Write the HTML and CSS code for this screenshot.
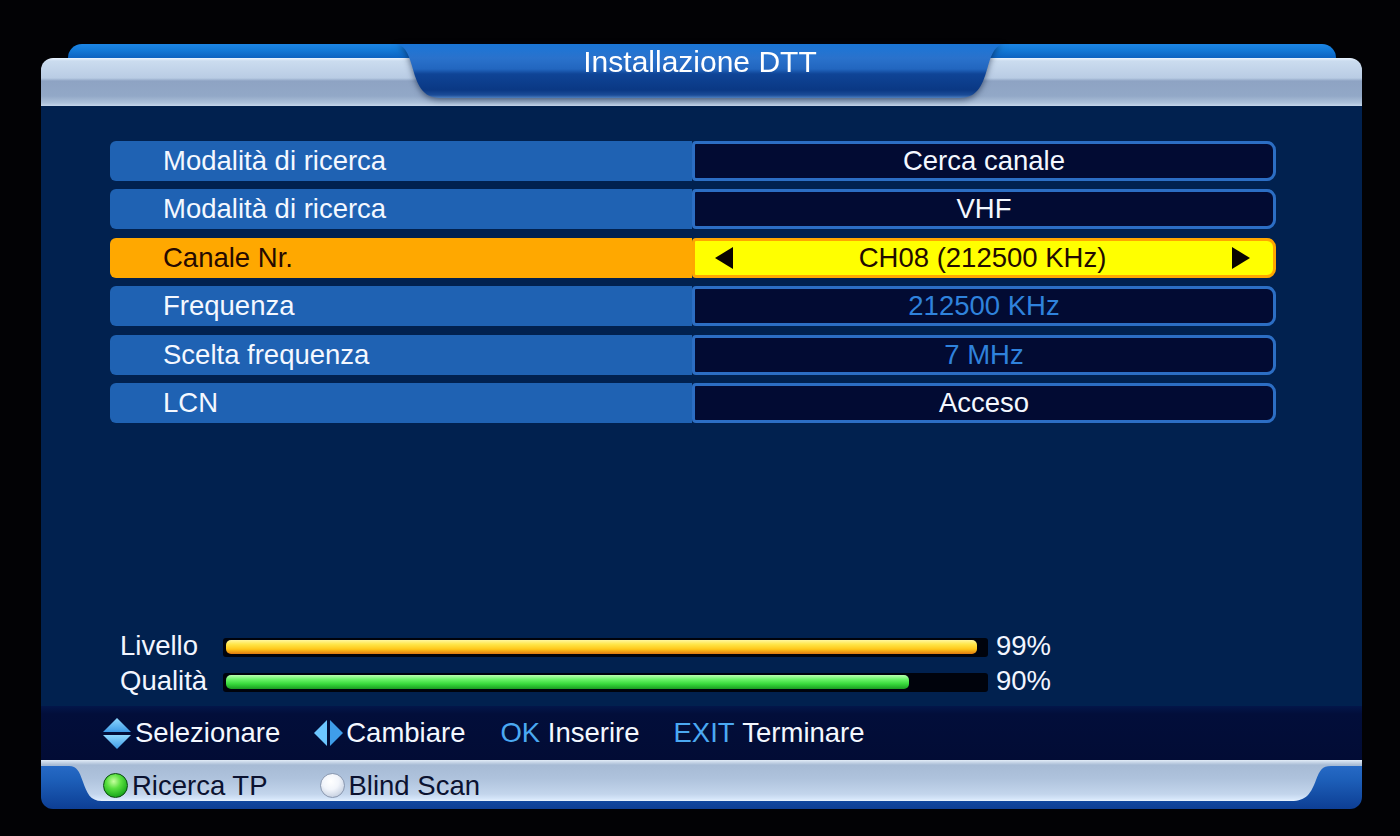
FILE: index.html
```html
<!DOCTYPE html>
<html lang="it">
<head>
<meta charset="utf-8">
<title>Installazione DTT</title>
<link rel="stylesheet" href="styles.css">
</head>
<body>
<div class="screen">
  <header class="header">
    <div class="hdr-strip"></div>
    <div class="hdr-bar"></div>
    <div class="hdr-tab">
      <div class="tab-shape"><h1 class="title">Installazione DTT</h1></div>
    </div>
  </header>

  <main class="main">
    <div class="rows">
      <div class="row"><div class="label">Modalità di ricerca</div><div class="value">Cerca canale</div></div>
      <div class="row"><div class="label">Modalità di ricerca</div><div class="value">VHF</div></div>
      <div class="row sel"><div class="label">Canale Nr.</div><div class="value"><span class="arr arr-l"></span><span class="val-text">CH08 (212500 KHz)</span><span class="arr arr-r"></span></div></div>
      <div class="row"><div class="label">Frequenza</div><div class="value dim">212500 KHz</div></div>
      <div class="row"><div class="label">Scelta frequenza</div><div class="value dim">7 MHz</div></div>
      <div class="row"><div class="label">LCN</div><div class="value">Acceso</div></div>
    </div>

    <div class="signal">
      <div class="sig-row">
        <span class="sig-label">Livello</span>
        <div class="track"><div class="fill fill-yellow" style="width:99%"></div></div>
        <span class="pct">99%</span>
      </div>
      <div class="sig-row">
        <span class="sig-label">Qualità</span>
        <div class="track"><div class="fill fill-green" style="width:90%"></div></div>
        <span class="pct">90%</span>
      </div>
    </div>
  </main>

  <div class="help">
    <div class="hitem">
      <svg class="ico-ud" width="28" height="31" viewBox="0 0 28 31">
        <defs>
          <linearGradient id="gb" x1="0" y1="0" x2="0" y2="1">
            <stop offset="0" stop-color="#8fd8ff"/>
            <stop offset="1" stop-color="#3d9ae6"/>
          </linearGradient>
        </defs>
        <polygon points="14,0 28,14 0,14" fill="url(#gb)"/>
        <polygon points="0,17 28,17 14,31" fill="url(#gb)"/>
      </svg>
      <span>Selezionare</span>
    </div>
    <div class="hitem">
      <svg class="ico-lr" width="29" height="26" viewBox="0 0 29 26">
        <polygon points="0,13 13,0 13,26" fill="#6cc6ff"/>
        <polygon points="16,0 29,13 16,26" fill="#3f9eea"/>
      </svg>
      <span>Cambiare</span>
    </div>
    <div class="hitem"><span class="key">OK</span>&nbsp;<span>Inserire</span></div>
    <div class="hitem"><span class="key">EXIT</span>&nbsp;<span>Terminare</span></div>
  </div>

  <footer class="bottom">
    <div class="silver">
      <div class="bitem"><span class="radio radio-green"></span><span>Ricerca TP</span></div>
      <div class="bitem"><span class="radio radio-white"></span><span>Blind Scan</span></div>
    </div>
  </footer>
</div>
</body>
</html>
```

FILE: styles.css
```css
html, body {
  margin: 0;
  padding: 0;
}

body {
  background: #020205;
  font-family: "Liberation Sans", Arial, sans-serif;
  color: #f2f6ff;
  width: 1400px;
  height: 836px;
  overflow: hidden;
}

.screen {
  width: 1321px;
  margin: 44px 0 0 41px;
}

/* ---------- header ---------- */
.header {
  position: relative;
  height: 62px;
}

.hdr-strip {
  height: 14px;
  margin: 0 26px 0 27px;
  border-radius: 16px 16px 0 0;
  background: linear-gradient(to bottom, #1c86e6 0, #137ad8 6px, #0c62c0 14px);
}

.hdr-bar {
  height: 48px;
  border-radius: 12px 12px 0 0;
  background: linear-gradient(to bottom,
    #eaf4ff 0,
    #cbdcef 3px,
    #b9cce4 20px,
    #8ea3c3 23px,
    #92a8c7 38px,
    #adc1da 45px,
    #c6d7ec 48px);
}

.hdr-tab {
  position: absolute;
  left: 353px;
  top: 0;
  width: 612px;
  height: 56px;
  filter: drop-shadow(0 2px 3px rgba(0, 16, 48, 0.55));
}

.tab-shape {
  width: 612px;
  height: 56px;
  clip-path: path("M0,0 H612 C602,0 598,8 594,22 C589,40 584,54 566,54 H46 C28,54 23,40 18,22 C14,8 10,0 0,0 Z");
  background: linear-gradient(to bottom,
    #1a76d8 0,
    #2a72cc 14px,
    #2266bf 25px,
    #0f4496 30px,
    #0a3884 46px,
    #1b4c98 51px,
    #4e7fbe 54px);
}

.title {
  margin: 0;
  padding-top: 2px;
  font-size: 30px;
  font-weight: normal;
  line-height: 32px;
  text-align: center;
  color: #ffffff;
}

/* ---------- main ---------- */
.main {
  height: 600px;
  box-sizing: border-box;
  background: #01214f;
  display: flex;
  flex-direction: column;
}

.rows {
  display: flex;
  flex-direction: column;
  gap: 8.4px;
  padding: 35px 86px 0 69px;
}

.row {
  display: flex;
  height: 40px;
  font-size: 27.5px;
  line-height: 40px;
}

.label {
  width: 582px;
  flex: none;
  box-sizing: border-box;
  padding-left: 53px;
  background: #1f62b3;
  border-radius: 6px 0 0 6px;
  color: #f4f8ff;
}

.value {
  flex: 1;
  box-sizing: border-box;
  border: 3px solid #2c6ec4;
  border-radius: 4px 9px 9px 4px;
  background: #020b33;
  text-align: center;
  line-height: 34px;
  color: #f4f8ff;
}

.value.dim {
  color: #2f82dc;
}

.row.sel .label {
  background: #ffa800;
  color: #260a00;
}

.row.sel .value {
  background: #ffff00;
  border-color: #ffa600;
  color: #220a00;
  display: flex;
  align-items: center;
  padding: 0 23px 0 20px;
}

.val-text {
  flex: 1;
  text-align: center;
}

.arr {
  width: 0;
  height: 0;
  border-top: 11px solid transparent;
  border-bottom: 11px solid transparent;
}

.arr-l {
  border-right: 18px solid #0a0400;
}

.arr-r {
  border-left: 18px solid #0a0400;
}

/* ---------- signal bars ---------- */
.signal {
  margin-top: auto;
  padding: 0 0 7.5px 79px;
}

.sig-row {
  display: flex;
  align-items: center;
  height: 35px;
  font-size: 27.5px;
}

.sig-label {
  width: 103px;
  flex: none;
  color: #f2f6ff;
}

.track {
  width: 765px;
  height: 19px;
  box-sizing: border-box;
  padding: 2.5px 3px;
  background: #00030c;
  border-radius: 3px;
  margin-top: 2px;
}

.fill {
  height: 14px;
  border-radius: 5px;
}

.fill-yellow {
  background: linear-gradient(to bottom, #fff7a0 0, #ffe64a 30%, #ffc81a 65%, #e07a10 100%);
}

.fill-green {
  background: linear-gradient(to bottom, #b8ffb0 0, #6cf46a 30%, #36d83a 65%, #1a9a22 100%);
}

.pct {
  margin-left: 8px;
  color: #f2f6ff;
}

/* ---------- help bar ---------- */
.help {
  height: 54px;
  display: flex;
  align-items: center;
  padding-left: 62px;
  background: linear-gradient(to bottom, #03164a 0, #020e3a 8px, #020c35 100%);
  font-size: 27.5px;
  color: #f4f8ff;
}

.hitem {
  display: flex;
  align-items: center;
  margin-right: 34px;
}

.hitem:nth-child(2) {
  margin-right: 35px;
}

.ico-ud {
  margin-right: 4px;
}

.ico-lr {
  margin-right: 3px;
}

.key {
  color: #4ba9f2;
}

/* ---------- bottom bar ---------- */
.bottom {
  height: 49px;
  border-radius: 6px 6px 12px 12px;
  background: linear-gradient(to bottom, #2a6ecb 0, #1d5fb9 40%, #0d3e94 100%);
}

.silver {
  height: 41px;
  box-sizing: border-box;
  padding: 10px 0 0 62px;
  display: flex;
  align-items: center;
  clip-path: path("M0,0 H1321 V6 H1290 C1281,6 1279,10 1275,20 C1270,33 1266,41 1250,41 H61 C49,41 46,33 42,22 C38,11 36,6 28,6 H0 Z");
  background: linear-gradient(to bottom,
    #e2ecf7 0,
    #a7bbd5 5px,
    #aec2dc 18px,
    #c3d5ec 34px,
    #d6e6fa 39px,
    #e8f3ff 41px);
  font-size: 27.5px;
  color: #0b1230;
}

.bitem {
  display: flex;
  align-items: center;
  margin-right: 52px;
}

.radio {
  width: 25px;
  height: 25px;
  box-sizing: border-box;
  border-radius: 50%;
  margin-right: 4px;
}

.radio-green {
  border: 1px solid #0a4a10;
  background: radial-gradient(circle at 42% 32%, #c6ff9e 0, #5ae040 35%, #22b020 70%, #0d7010 100%);
}

.radio-white {
  border: 1px solid #8a98b0;
  background: radial-gradient(circle at 42% 32%, #ffffff 0, #f2f5fb 40%, #ccd5e4 75%, #9aa8c0 100%);
}
```
